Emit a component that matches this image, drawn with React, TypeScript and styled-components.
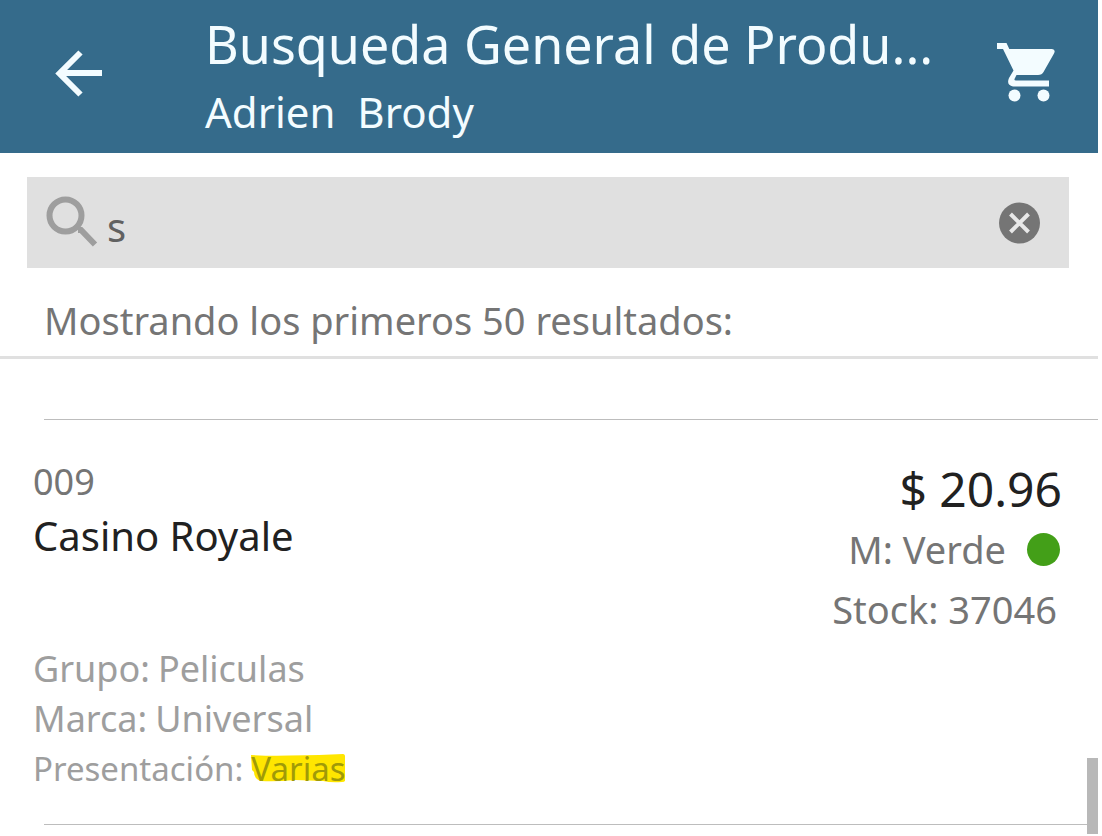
import React, { useState } from "react";
import styled, { createGlobalStyle } from "styled-components";

const GlobalStyle = createGlobalStyle`
  * { box-sizing: border-box; }
  html { background: #ffffff; overflow-x: hidden; }
  body {
    margin: 0;
    font-family: "Noto Sans", "Open Sans", sans-serif;
    font-weight: 400;
    color: #212121;
  }
`;

const Screen = styled.div`
  position: relative;
  min-height: 100vh;
  padding-right: 4px;
  background: #ffffff;
`;

const Header = styled.header`
  display: flex;
  align-items: flex-start;
  padding: 12px 40px 11px 52px;
  background: #356b8b;
  color: #f3fcff;
`;

const IconButton = styled.button`
  display: block;
  flex: none;
  margin: 0;
  padding: 0;
  border: 0;
  background: none;
  color: inherit;
  line-height: 0;
  cursor: pointer;
`;

const BackButton = styled(IconButton)`
  margin-top: 35px;
`;

const CartButton = styled(IconButton)`
  margin-top: 30px;
`;

const Titles = styled.div`
  flex: 1;
  min-width: 0;
  margin-left: 101px;
`;

const Title = styled.h1`
  margin: 0;
  font-size: 52px;
  line-height: 64px;
  font-weight: 400;
  white-space: nowrap;
`;

const Subtitle = styled.p`
  margin: 6px 0 0;
  font-size: 42px;
  line-height: 60px;
  white-space: pre;
`;

const SearchBar = styled.form`
  display: flex;
  align-items: center;
  height: 91px;
  margin: 24px 29px 0 27px;
  padding: 0 29px 0 18px;
  background: #e0e0e0;
`;

const SearchLabel = styled.label`
  flex: none;
  line-height: 0;
  color: #9e9e9e;
`;

const SearchInput = styled.input`
  flex: 1;
  min-width: 0;
  height: 68px;
  margin: 0 0 0 9px;
  padding: 8px 0 0;
  border: 0;
  outline: none;
  background: none;
  font: inherit;
  font-size: 40px;
  color: #616161;
`;

const ClearButton = styled(IconButton)`
  color: #757575;
`;

const ResultSummary = styled.p`
  margin: 0;
  padding: 26px 44px 10px;
  border-bottom: 3px solid #e0e0e0;
  font-size: 38px;
  line-height: 52px;
  color: #757575;
  white-space: nowrap;
`;

const Results = styled.ul`
  margin: 60px 0 0;
  padding: 0;
  list-style: none;
`;

const Divider = styled.li`
  height: 1px;
  margin-left: 44px;
  background: #bdbdbd;
`;

const Product = styled.li`
  padding: 38px 36px 30px 33px;
`;

const ProductTop = styled.div`
  display: flex;
  justify-content: space-between;
`;

const Code = styled.p`
  margin: 0;
  font-size: 36px;
  line-height: 48px;
  color: #757575;
`;

const Name = styled.h2`
  margin: 0;
  font-size: 40px;
  line-height: 60px;
  font-weight: 400;
`;

const Figures = styled.div`
  display: flex;
  flex-direction: column;
  align-items: flex-end;
  padding-top: 1px;
`;

const Price = styled.p`
  margin: 0;
  font-size: 48px;
  line-height: 60px;
`;

const Figure = styled.p`
  display: flex;
  align-items: center;
  gap: 21px;
  margin: 0;
  padding-right: ${(p: { $inset?: boolean }) => (p.$inset ? "5px" : "2px")};
  font-size: 38px;
  line-height: 60px;
  color: #757575;
`;

const Dot = styled.span`
  width: 33px;
  height: 33px;
  border-radius: 50%;
  background: #439f18;
`;

const Details = styled.dl`
  margin: 5px 0 0;
  line-height: 50px;
  color: #9e9e9e;
`;

const Detail = styled.div<{ $small?: boolean }>`
  display: flex;
  gap: 8px;
  font-size: ${(p) => (p.$small ? "33px" : "36px")};

  dt, dd { margin: 0; }
`;

const Marked = styled.mark`
  position: relative;
  z-index: 0;
  background: none;
  color: #a09a08;
`;

const MarkerStroke = styled.svg`
  position: absolute;
  z-index: -1;
  left: 0;
  top: 8px;
  width: 100%;
  height: 29px;
`;

const ScrollThumb = styled.div`
  position: fixed;
  right: 4px;
  bottom: 2px;
  width: 11px;
  height: 76px;
  background: #b8b8b8;
`;

const details = [
  { label: "Grupo:", value: "Peliculas" },
  { label: "Marca:", value: "Universal" },
  { label: "Presentación:", value: "Varias", marked: true },
];

export default function App() {
  const [query, setQuery] = useState("s");

  return (
    <Screen>
      <GlobalStyle />
      <Header>
        <BackButton type="button" aria-label="Volver">
          <svg width="52" height="52" viewBox="0 0 52 52" fill="none" stroke="currentColor" strokeWidth="6">
            <path d="M50 26H8M28.500 5.500L7.500 26.500L28.500 47.500" />
          </svg>
        </BackButton>
        <Titles>
          <Title>Busqueda General de Produ...</Title>
          <Subtitle>Adrien  Brody</Subtitle>
        </Titles>
        <CartButton type="button" aria-label="Carrito">
          <svg width="62" height="62" viewBox="0 0 62 62" fill="currentColor">
            <path d="M1 1H10.500L13.300 7H56Q60 7.500 58 11.500L47.500 30Q46 33 42 33H20.500L18.500 37Q18 38.500 20 38.500H53V44.500H17Q10 43 13 36L17.500 28.500L7 7H1Z" />
            <circle cx="18.500" cy="53.500" r="6" />
            <circle cx="47.500" cy="53.500" r="6" />
          </svg>
        </CartButton>
      </Header>

      <SearchBar onSubmit={(e) => e.preventDefault()}>
        <SearchLabel htmlFor="query" aria-label="Buscar">
          <svg width="53" height="53" viewBox="0 0 53 53" fill="none" stroke="currentColor" strokeWidth="6">
            <circle cx="20.500" cy="19.500" r="16" />
            <path d="M33 34L36 34L50 48.500" />
          </svg>
        </SearchLabel>
        <SearchInput id="query" value={query} onChange={(e) => setQuery(e.target.value)} />
        <ClearButton type="button" aria-label="Borrar" onClick={() => setQuery("")}>
          <svg width="42" height="42" viewBox="0 0 42 42">
            <circle cx="21.500" cy="21" r="20.500" fill="currentColor" />
            <path d="M12.500 12L30.500 30M30.500 12L12.500 30" stroke="#e8e8e8" strokeWidth="4" />
          </svg>
        </ClearButton>
      </SearchBar>

      <ResultSummary>Mostrando los primeros 50 resultados:</ResultSummary>

      <Results>
        <Divider role="presentation" />
        <Product>
          <ProductTop>
            <div>
              <Code>009</Code>
              <Name>Casino Royale</Name>
            </div>
            <Figures>
              <Price>$ 20.96</Price>
              <Figure>
                M: Verde
                <Dot />
              </Figure>
              <Figure $inset>Stock: 37046</Figure>
            </Figures>
          </ProductTop>
          <Details>
            {details.map((d) => (
              <Detail key={d.label} $small={d.marked}>
                <dt>{d.label}</dt>
                <dd>
                  {d.marked ? (
                    <Marked>
                      <MarkerStroke viewBox="0 0 94 29" preserveAspectRatio="none" aria-hidden="true">
                        <path
                          d="M0 1Q20 2 38 1.500T68 1L92 0Q94 0 94 3V26Q94 28 91 28Q80 29 72 27L44 26Q24 28 10 27Q3 25 3 18L1 16Z"
                          fill="#ffe600"
                        />
                      </MarkerStroke>
                      {d.value}
                    </Marked>
                  ) : (
                    d.value
                  )}
                </dd>
              </Detail>
            ))}
          </Details>
        </Product>
        <Divider role="presentation" />
      </Results>
      <ScrollThumb />
    </Screen>
  );
}
